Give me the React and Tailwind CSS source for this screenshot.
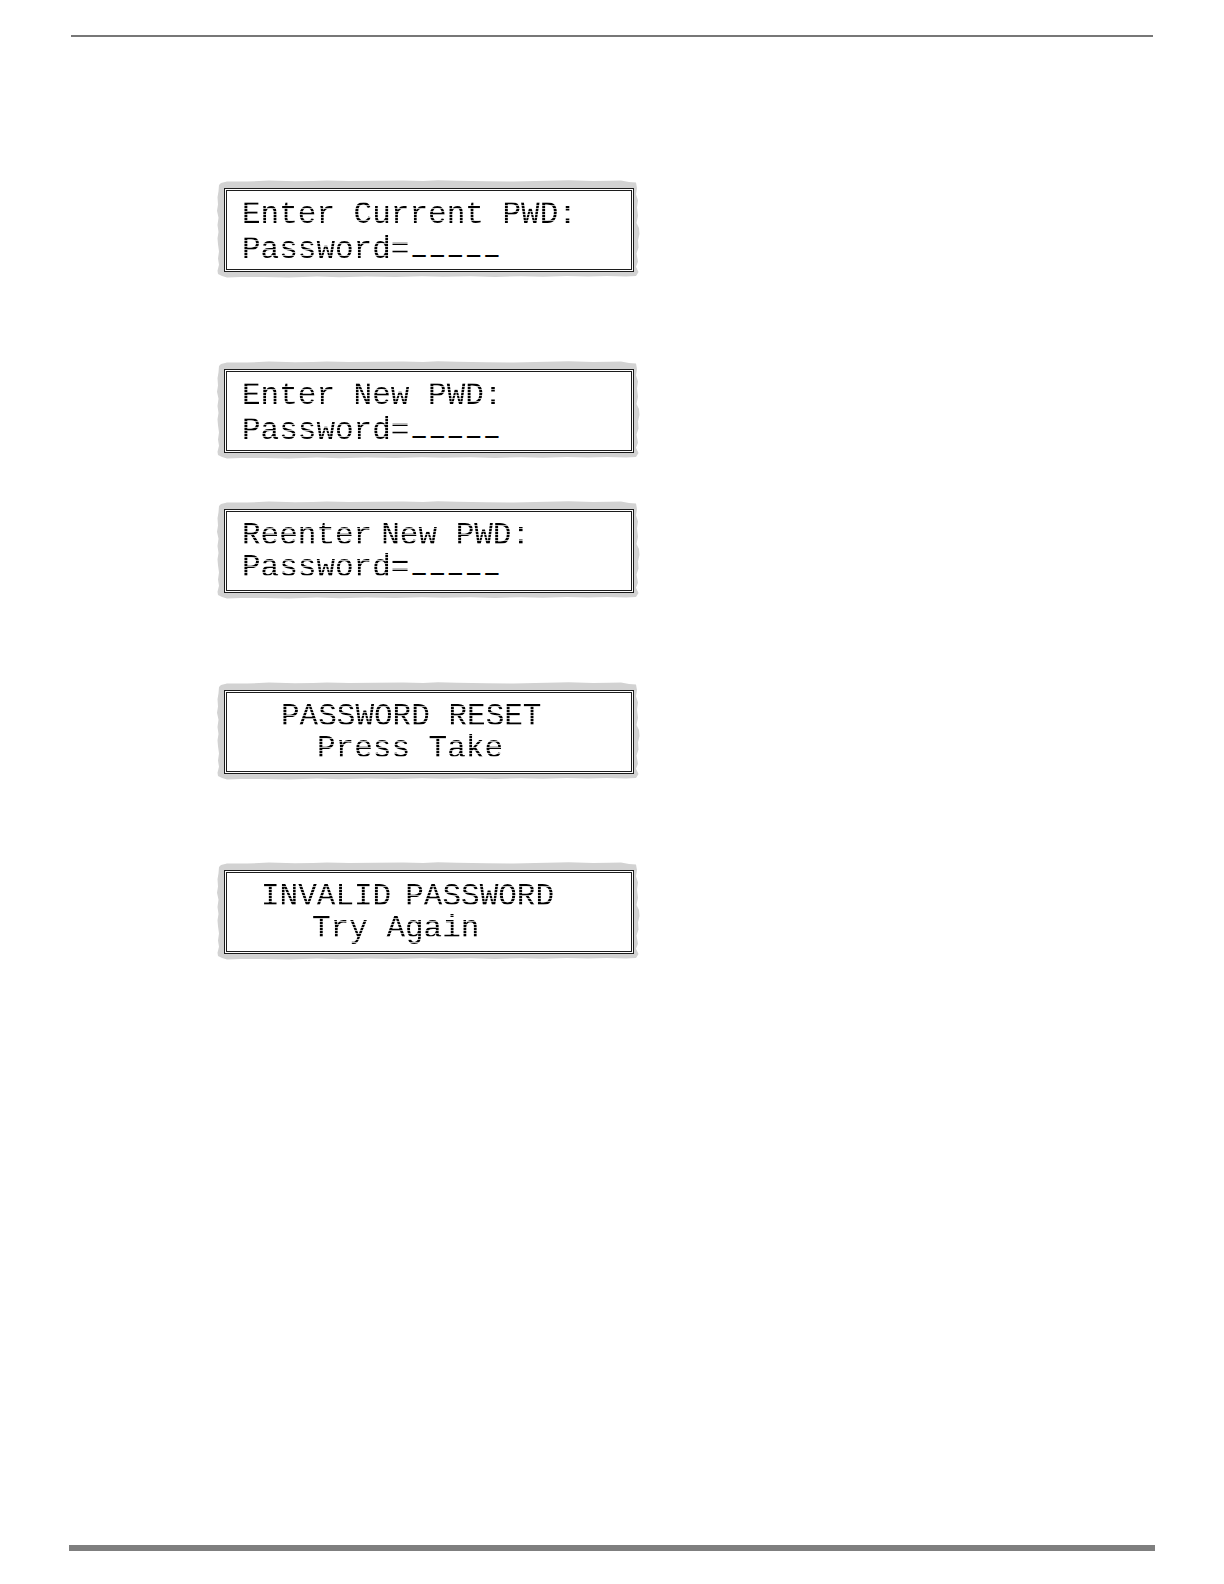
const screens = [
  {
    id: 'current',
    spacing: 'mt-[143px]',
    rows: 'pt-[6px] leading-[35px]',
    lines: [
      { indent: 'pl-[15px]', words: ['Enter Current PWD:'] },
      { indent: 'pl-[15px]', words: ['Password='], blanks: 5 },
    ],
  },
  {
    id: 'new',
    spacing: 'mt-[83px]',
    rows: 'pt-[6px] leading-[35px]',
    lines: [
      { indent: 'pl-[15px]', words: ['Enter New PWD:'] },
      { indent: 'pl-[15px]', words: ['Password='], blanks: 5 },
    ],
  },
  {
    id: 'reenter',
    spacing: 'mt-[42px]',
    rows: 'pt-[8px] leading-[32px]',
    lines: [
      { indent: 'pl-[15px]', words: ['Reenter', 'New PWD:'], gap: 'gap-[9px]' },
      { indent: 'pl-[15px]', words: ['Password='], blanks: 5 },
    ],
  },
  {
    id: 'reset',
    spacing: 'mt-[83px]',
    rows: 'pt-[8px] leading-[32px]',
    lines: [
      { indent: 'pl-[54px]', words: ['PASSWORD RESET'] },
      { indent: 'pl-[90px]', words: ['Press Take'] },
    ],
  },
  {
    id: 'invalid',
    spacing: 'mt-[82px]',
    rows: 'pt-[8px] leading-[32px]',
    lines: [
      { indent: 'pl-[34px]', words: ['INVALID', 'PASSWORD'], gap: 'gap-[14px]' },
      { indent: 'pl-[85px]', words: ['Try Again'] },
    ],
  },
];

const TornEdge = () => (
  <svg
    className="absolute inset-0 h-full w-full"
    viewBox="0 0 423 96"
    preserveAspectRatio="none"
    aria-hidden="true"
  >
    <path
      fill="#d2d2d2"
      d="M2 5 L4 3 L10 1.5 L30 1.5 L52 0.6 L78 1.2 L96 1 L110 0.4 L132 1 L158 0.8 L186 0.5 L206 1 L221 0.2 L240 0.8 L270 1.2 L296 1.4 L330 0.8 L352 0.3 L376 1 L392 0.8 L404 0.4 L412 2 L419 2.5 L420 8 L419 14 L421 20 L420 27 L421 35 L419.5 42 L422 47 L422.5 53 L421 59 L421.5 66 L419.5 72 L421 80 L419 85 L421.5 90 L419 94 L409 94.5 L390 94 L371 94.6 L350 94 L326 94.8 L304 94.3 L278 95 L254 94.4 L226 94.8 L205 94.3 L178 95 L150 94.5 L123 95.2 L100 94.5 L72 95.6 L46 95 L24 95 L10 95.6 L5 94 L1 92 L0.5 89 L2 83 L1 77 L2 70 L1 63 L0.5 57 L1.5 51 L0.5 44 L1.5 37 L0 30 L1 24 L0.5 17 L1.5 11 Z"
    />
  </svg>
);

// The row mask breaks the glyph strokes up like the dots of an LCD
const Line = ({ indent, words, gap = 'gap-0', blanks = 0 }) => (
  <p className={`flex items-center whitespace-pre ${indent}`}>
    <span
      className={`flex [mask-image:repeating-linear-gradient(to_bottom,black_0px,black_2px,rgb(0_0_0/0.3)_2px,rgb(0_0_0/0.3)_3px)] ${gap}`}
    >
      {words.map((word) => (
        <span key={word}>{word}</span>
      ))}
    </span>
    {blanks > 0 && (
      <span className="flex gap-[5px] pb-[2px] pl-[3px] text-[22px] leading-[22px] font-bold [text-shadow:0_1px_black]">
        {Array.from({ length: blanks }, (_, i) => (
          <span key={i}>_</span>
        ))}
      </span>
    )}
  </p>
);

const Screen = ({ spacing, rows, lines }) => (
  <section className={`relative w-[423px] max-w-full pt-2 pr-[6px] pb-[6px] pl-[7px] ${spacing}`}>
    <TornEdge />
    <div className="relative h-[84px] border-[3px] border-double border-[#1c1c1c] bg-white">
      <div className={`font-['Liberation_Mono',monospace] text-[31px] text-black ${rows}`}>
        {lines.map((line, i) => (
          <Line key={i} {...line} />
        ))}
      </div>
    </div>
  </section>
);

const App = () => {
  return (
    <div className="flex min-h-screen flex-col bg-white px-[69px] pt-[35px] pb-[33px]">
      <header className="mx-[2px] h-[2px] bg-[#777777]"></header>
      <main className="flex-1 pl-[148px]">
        {screens.map((screen) => (
          <Screen key={screen.id} {...screen} />
        ))}
      </main>
      <footer className="h-[6px] bg-[#7f7f7f]"></footer>
    </div>
  );
};

export default App;
